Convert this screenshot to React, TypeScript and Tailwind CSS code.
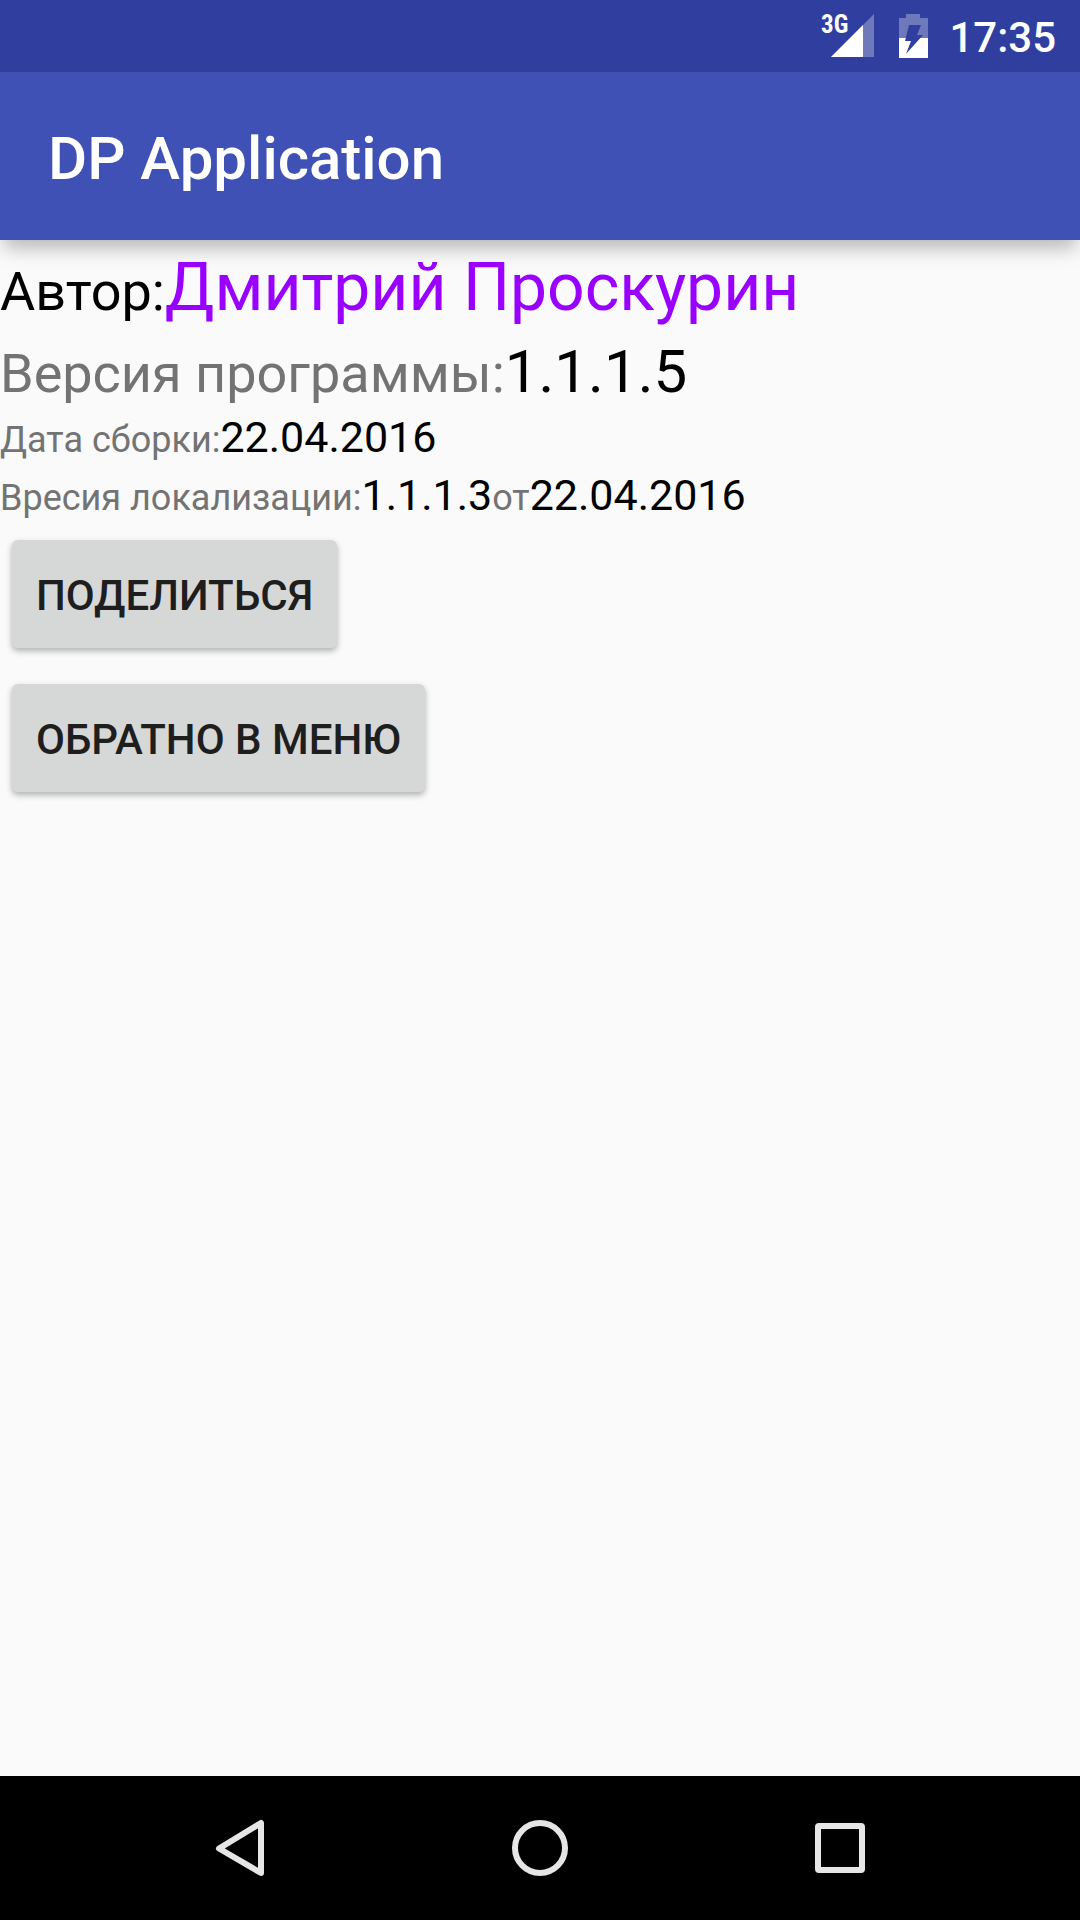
import React from "react";

function StatusBar() {
  return (
    <div className="relative z-10 flex h-[72px] shrink-0 items-center justify-end bg-[#303f9f] pr-6 text-white">
      <svg className="h-[72px] w-[60px]" viewBox="0 0 60 72" aria-hidden="true">
        <path d="M57 14V57H14Z" fill="#fff" fillOpacity="0.3" />
        <path d="M46 25V57H14Z" fill="#fff" />
        <text x="4" y="33" fontSize="25" fontWeight="700" fill="#fff" fontFamily="'Roboto Condensed', Roboto, sans-serif">3G</text>
      </svg>
      <svg className="ml-4 h-[72px] w-12" viewBox="0 0 48 72" aria-hidden="true">
        <path d="M13 14h14v4h8v20H6V18h7z" fill="#fff" fillOpacity="0.3" />
        <path d="M6 38h29v20H6z" fill="#fff" />
        <path d="M16 25H28L24 35H30L13 54L18 41H12Z" fill="#303f9f" />
      </svg>
      <span className="ml-2 pt-0.5 text-[42px] font-medium">17:35</span>
    </div>
  );
}

const buttonClass =
  "h-[108px] rounded-md bg-[#d6d7d7] px-6 pt-1 text-[42px] leading-[48px] font-medium uppercase text-[#1e1e1e] shadow-[0_3px_6px_rgba(0,0,0,0.3)]";

export default function App() {
  return (
    <div className="flex min-h-screen flex-col bg-[#fafafa] font-['Roboto',sans-serif]">
      <StatusBar />
      <header className="flex h-[168px] shrink-0 items-center bg-[#3f51b5] px-12 pt-1.5 shadow-[0_12px_18px_-4px_rgba(0,0,0,0.27)]">
        <h1 className="text-[60px] font-medium text-white">DP Application</h1>
      </header>
      <main className="flex flex-1 flex-col items-start whitespace-nowrap text-[#737373]">
        <p className="flex items-baseline text-black">
          <span className="text-[54px]">Автор:</span>
          <span className="text-[66px] leading-[96px] text-[#9900ff]">Дмитрий Проскурин</span>
        </p>
        <p className="flex items-baseline">
          <span className="text-[54px] leading-[72px]">Версия программы:</span>
          <span className="text-[60px] leading-[72px] text-black">1.1.1.5</span>
        </p>
        <p className="flex items-baseline">
          <span className="text-[36px] leading-[55px]">Дата сборки:</span>
          <span className="text-[43px] leading-[55px] text-black">22.04.2016</span>
        </p>
        <p className="flex items-baseline">
          <span className="text-[36px] leading-[55px]">Вресия локализации:</span>
          <span className="text-[43px] leading-[55px] text-black">1.1.1.3</span>
          <span className="text-[36px] leading-[55px]">от</span>
          <span className="text-[43px] leading-[55px] text-black">22.04.2016</span>
        </p>
        <div className="flex flex-col items-start gap-9 px-3 pt-3.5">
          <button type="button" className={buttonClass}>Поделиться</button>
          <button type="button" className={buttonClass}>Обратно в меню</button>
        </div>
      </main>
      <nav className="flex h-36 shrink-0 items-center justify-center gap-[156px] bg-black">
        <button type="button" aria-label="Назад">
          <svg className="h-36 w-36" viewBox="0 0 144 144" fill="none" stroke="#e6e6e6" strokeWidth="6" strokeLinejoin="round">
            <path d="M93 47V97L51 72.5Z" />
          </svg>
        </button>
        <button type="button" aria-label="Домой">
          <svg className="h-36 w-36" viewBox="0 0 144 144" fill="none" stroke="#e6e6e6" strokeWidth="6">
            <circle cx="72" cy="72" r="25" />
          </svg>
        </button>
        <button type="button" aria-label="Обзор">
          <svg className="h-36 w-36" viewBox="0 0 144 144" fill="none" stroke="#e6e6e6" strokeWidth="6" strokeLinejoin="round">
            <rect x="50" y="50" width="44" height="44" rx="1" />
          </svg>
        </button>
      </nav>
    </div>
  );
}
